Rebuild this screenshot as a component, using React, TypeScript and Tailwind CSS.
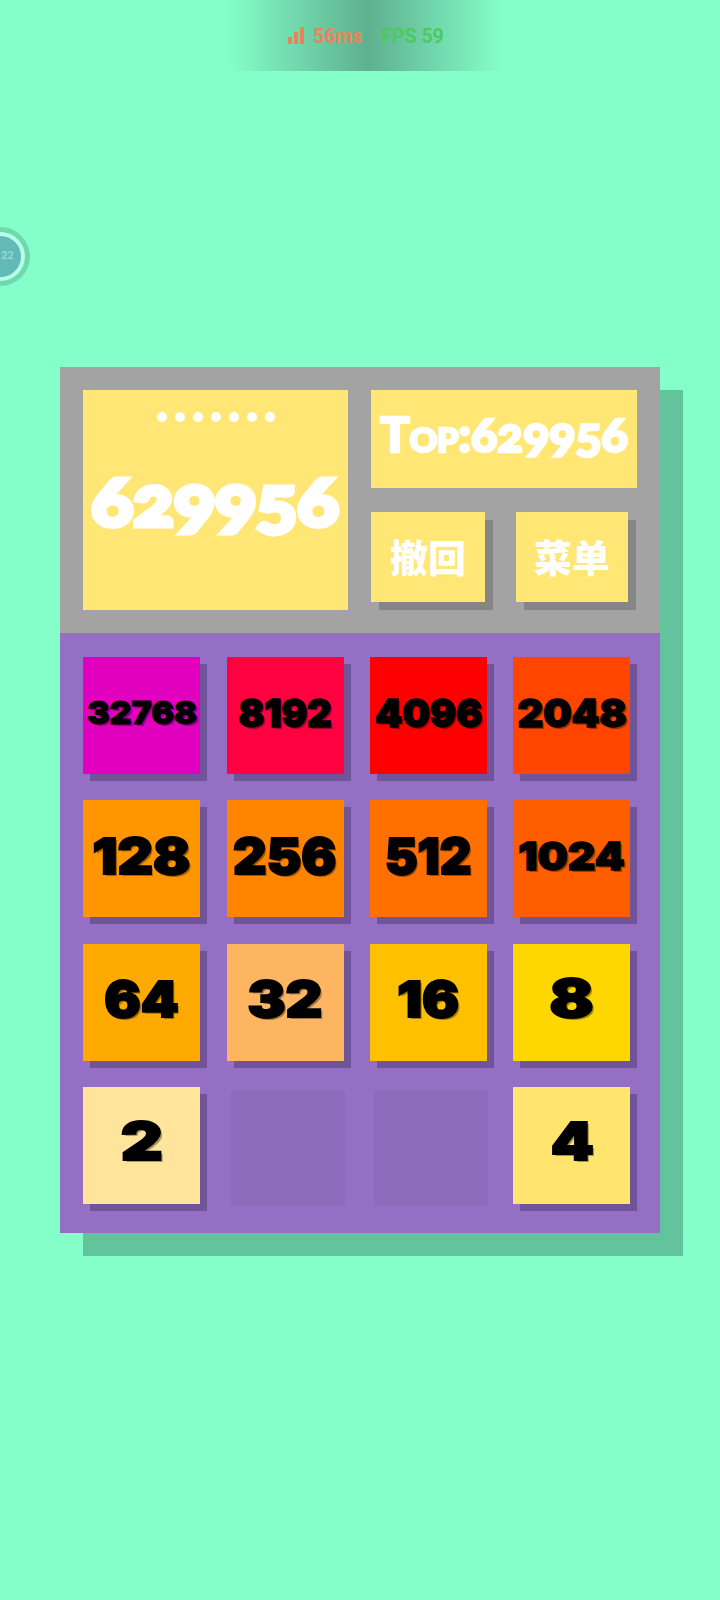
import React from 'react';

type Tile = { value: string; bg: string; size: string };

// the game shrinks long numbers to fit, widths tuned per number
const big = 'text-[50px] [-webkit-text-stroke:2px_black]';
const mid = 'text-[38px] [-webkit-text-stroke:1.5px_black]';

const tiles: (Tile | null)[] = [
  { value: '32768', bg: 'bg-[#e000bd]', size: 'text-[32px] scale-x-[1.06] [-webkit-text-stroke:1px_black]' },
  { value: '8192', bg: 'bg-[#ff0040]', size: `${mid} scale-x-[1.0]` },
  { value: '4096', bg: 'bg-[#ff0000]', size: `${mid} scale-x-[1.02]` },
  { value: '2048', bg: 'bg-[#ff4500]', size: `${mid} scale-x-[1.05]` },
  { value: '128', bg: 'bg-[#ff9500]', size: `${big} scale-x-[1.1]` },
  { value: '256', bg: 'bg-[#ff8400]', size: `${big} scale-x-[1.04]` },
  { value: '512', bg: 'bg-[#ff7000]', size: `${big} scale-x-[0.98]` },
  { value: '1024', bg: 'bg-[#ff5e00]', size: `${mid} scale-x-[1.12]` },
  { value: '64', bg: 'bg-[#ffaa00]', size: `${big} scale-x-[1.08]` },
  { value: '32', bg: 'bg-[#fdb562]', size: `${big} scale-x-[1.14]` },
  { value: '16', bg: 'bg-[#ffc000]', size: `${big} scale-x-[1.1]` },
  { value: '8', bg: 'bg-[#ffd700]', size: 'text-[52px] scale-x-[1.25] [-webkit-text-stroke:2px_black]' },
  { value: '2', bg: 'bg-[#ffe49b]', size: 'text-[52px] scale-x-[1.25] [-webkit-text-stroke:2px_black]' },
  null,
  null,
  { value: '4', bg: 'bg-[#ffe56d]', size: 'text-[52px] scale-x-[1.18] [-webkit-text-stroke:2px_black]' },
];

function TileCell({ tile }: { tile: Tile | null }) {
  if (!tile) {
    return <div className="mt-[4px] ml-[4px] h-[115px] w-[114px] bg-[#8c6bba]" />;
  }
  return (
    <div className={`flex h-[117px] w-[117px] items-center justify-center shadow-[7px_7px_0_#6f5499] ${tile.bg}`}>
      <span
        className={`mb-[6px] font-['Inter',sans-serif] leading-none font-black text-black [text-shadow:2px_2px_0_rgba(0,0,0,0.35)] ${tile.size}`}
      >
        {tile.value}
      </span>
    </div>
  );
}

function PerfOverlay() {
  return (
    <div className="absolute top-0 left-[228px] flex h-[71px] w-[274px] items-center bg-gradient-to-r from-[#84ffc9] via-[#5fb08f] via-[51%] to-[#84ffc9] pl-[60px] font-['Roboto',sans-serif] text-[19.5px] font-bold">
      <svg width="16" height="17" viewBox="0 0 16 17" fill="#f08058">
        <rect x="0" y="10" width="4" height="7" />
        <rect x="6" y="5" width="4" height="12" />
        <rect x="12" y="0" width="4" height="17" />
      </svg>
      <span className="mt-[2px] ml-[9px] text-[#f08058]">56ms</span>
      <span className="mt-[2px] ml-[19px] text-[#4cc95f]">FPS 59</span>
    </div>
  );
}

function SideBadge() {
  return (
    <div className="absolute top-[227px] left-[-29px] flex h-[59px] w-[59px] items-center justify-center rounded-full bg-[#6fd9ae]">
      <div className="flex h-[49px] w-[49px] items-center justify-center rounded-full border-[4px] border-[#b4ffe6] bg-[#62b9b8]">
        <span className="ml-[14px] font-['Roboto',sans-serif] text-[11px] font-bold text-[#93d8cf]">22</span>
      </div>
    </div>
  );
}

export default function App() {
  return (
    <div className="relative h-[1600px] w-[720px] overflow-hidden bg-[#84ffc9] pt-[367px] pl-[60px]">
      <PerfOverlay />
      <SideBadge />
      <div className="w-[600px] shadow-[23px_23px_0_#61c49c]">
        <div className="flex h-[266px] bg-[#a3a3a3] pt-[23px] pl-[23px]">
          <div className="flex h-[220px] w-[265px] flex-col items-center bg-[#ffe675] font-['Lato',sans-serif] text-white">
            <div className="mt-[22px] flex gap-[8px]">
              {[0, 1, 2, 3, 4, 5, 6].map((i) => (
                <div key={i} className="h-[10px] w-[10px] rounded-full bg-white" />
              ))}
            </div>
            <div className="mt-[44px] scale-x-[1.12] text-[68px] leading-none font-black oldstyle-nums [-webkit-text-stroke:5px_white]">
              629956
            </div>
          </div>
          <div className="ml-[23px] w-[266px]">
            <div className="flex h-[98px] items-center justify-center bg-[#ffe675] pb-[10px] font-['Lato',sans-serif] text-white">
              <span className="scale-x-[1.03] text-[47px] leading-none font-black oldstyle-nums [font-variant-caps:small-caps] [-webkit-text-stroke:2.5px_white]">
                Top:629956
              </span>
            </div>
            <div className="mt-[24px] flex gap-[31px]">
              <div className="flex h-[90px] w-[114px] items-center justify-center bg-[#ffe675] pb-[4px] font-['Noto_Sans_CJK_SC',sans-serif] text-[38px] font-black text-white shadow-[8px_8px_0_#868686]">
                撤回
              </div>
              <div className="flex h-[90px] w-[112px] items-center justify-center bg-[#ffe675] pb-[4px] font-['Noto_Sans_CJK_SC',sans-serif] text-[38px] font-black text-white shadow-[8px_8px_0_#868686]">
                菜单
              </div>
            </div>
          </div>
        </div>
        <div className="h-[600px] bg-[#946fc4] pt-[24px] pl-[23.2px]">
          <div className="grid grid-cols-[repeat(4,117px)] grid-rows-[repeat(4,117px)] gap-x-[26.4px] gap-y-[26.33px]">
            {tiles.map((tile, i) => (
              <TileCell key={i} tile={tile} />
            ))}
          </div>
        </div>
      </div>
    </div>
  );
}
